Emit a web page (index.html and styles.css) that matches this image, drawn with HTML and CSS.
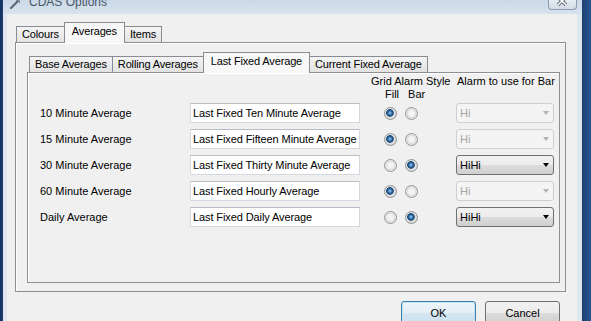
FILE: index.html
```html
<!DOCTYPE html>
<html lang="en">
<head>
    <meta charset="UTF-8">
    <title>CDAS Options</title>
    <link rel="stylesheet" href="styles.css">
</head>
<body>
    <div class="window">
        <div class="titlebar">
            <svg class="app-icon" width="10" height="9" viewBox="0 0 10 9">
                <path d="M1 8 L8 1" stroke="#5a6470" stroke-width="2" stroke-linecap="round"/>
                <path d="M6 0.5 L9.5 0.5 L9.5 3" stroke="#7a8490" stroke-width="1" fill="none"/>
            </svg>
            <span class="title">CDAS Options</span>
            <div class="close-btn">
                <svg width="13" height="8" viewBox="0 0 13 8">
                    <path d="M2 -3 L10 5 M10 -3 L2 5" stroke="#5b6878" stroke-width="3.4"/>
                    <path d="M2 -3 L10 5 M10 -3 L2 5" stroke="#ffffff" stroke-width="1.6"/>
                </svg>
            </div>
        </div>

        <div class="client">
            <div class="tabs outer-tabs">
                <div class="tab">Colours</div>
                <div class="tab selected">Averages</div>
                <div class="tab">Items</div>
            </div>
            <div class="panel outer-panel">
                <div class="tabs inner-tabs">
                    <div class="tab">Base Averages</div>
                    <div class="tab">Rolling Averages</div>
                    <div class="tab selected">Last Fixed Average</div>
                    <div class="tab">Current Fixed Average</div>
                </div>
                <div class="panel inner-panel">
                    <div class="head-row cols">
                        <span class="head-style">Grid Alarm Style</span>
                        <span class="head-alarm">Alarm to use for Bar</span>
                    </div>
                    <div class="sub-head cols">
                        <span class="sub-pair"><span>Fill</span><span>Bar</span></span>
                    </div>

                    <div class="avg-row cols">
                        <span class="row-label">10 Minute Average</span>
                        <div class="textbox">Last Fixed Ten Minute Average</div>
                        <div class="radios"><span class="radio checked"></span><span class="radio"></span></div>
                        <div class="combo disabled"><span>Hi</span><span class="arrow"></span></div>
                    </div>
                    <div class="avg-row cols">
                        <span class="row-label">15 Minute Average</span>
                        <div class="textbox">Last Fixed Fifteen Minute Average</div>
                        <div class="radios"><span class="radio checked"></span><span class="radio"></span></div>
                        <div class="combo disabled"><span>Hi</span><span class="arrow"></span></div>
                    </div>
                    <div class="avg-row cols">
                        <span class="row-label">30 Minute Average</span>
                        <div class="textbox">Last Fixed Thirty Minute Average</div>
                        <div class="radios"><span class="radio"></span><span class="radio checked"></span></div>
                        <div class="combo"><span>HiHi</span><span class="arrow"></span></div>
                    </div>
                    <div class="avg-row cols">
                        <span class="row-label">60 Minute Average</span>
                        <div class="textbox">Last Fixed Hourly Average</div>
                        <div class="radios"><span class="radio checked"></span><span class="radio"></span></div>
                        <div class="combo disabled"><span>Hi</span><span class="arrow"></span></div>
                    </div>
                    <div class="avg-row cols">
                        <span class="row-label">Daily Average</span>
                        <div class="textbox">Last Fixed Daily Average</div>
                        <div class="radios"><span class="radio"></span><span class="radio checked"></span></div>
                        <div class="combo"><span>HiHi</span><span class="arrow"></span></div>
                    </div>
                </div>
            </div>

            <div class="buttons">
                <button class="btn default">OK</button>
                <button class="btn">Cancel</button>
            </div>
        </div>
    </div>
</body>
</html>
```

FILE: styles.css
```css
body {
    margin: 0;
    height: 321px;
    overflow: hidden;
    background: linear-gradient(90deg, #14305c 0, #1d3f73 3px, #1d3f73 582px, #2a5590 591px);
    font-family: "Liberation Sans", Arial, sans-serif;
    font-size: 11px;
    color: #000000;
}

.window {
    width: 579px;
    height: 340px;
    margin-left: 3px;
    background: #dfe6ee;
    display: flex;
    flex-direction: column;
}

/* title bar, top is cut off by the screenshot */
.titlebar {
    height: 14px;
    display: flex;
    align-items: flex-start;
    background: linear-gradient(#cad8e7, #d9e3ee);
    overflow: hidden;
}

.app-icon {
    margin: 0 0 0 7px;
}

.title {
    margin: -5px 0 0 9px;
    font-size: 12px;
    line-height: 14px;
    color: #4a5868;
}

.close-btn {
    margin-left: auto;
    margin-right: 5px;
    width: 29px;
    height: 10px;
    box-sizing: border-box;
    border: 1px solid #8d9aab;
    border-top: none;
    border-radius: 0 0 4px 4px;
    background: linear-gradient(#e6ecf3, #d3dce7);
    display: flex;
    justify-content: center;
}

.client {
    flex: 1;
    margin: 0 5px 0 4px;
    padding: 8px 0 0 8px;
    background: #f0f0f0;
}

/* tabs */
.tabs {
    display: flex;
    align-items: flex-end;
    height: 20px;
}

.outer-tabs {
    padding-left: 1px;
}

.inner-tabs {
    padding-left: 2px;
}

.tab {
    height: 16px;
    box-sizing: border-box;
    padding: 0 5px;
    margin-right: -1px;
    border: 1px solid #898c95;
    border-bottom: none;
    background: linear-gradient(#f4f4f4, #e2e2e2);
    line-height: 15px;
    letter-spacing: -0.15px;
    white-space: nowrap;
}

.tab.selected {
    height: 21px;
    margin-bottom: -1px;
    padding: 0 7px;
    line-height: 17px;
    background: #f7f7f7;
    position: relative;
    z-index: 1;
}

.panel {
    box-sizing: border-box;
    border: 1px solid #8e8f91;
    box-shadow: inset 1px 1px 0 #ffffff;
    background: #f0f0f0;
}

.outer-panel {
    width: 551px;
    height: 250px;
    padding: 9px 0 0 11px;
}

.inner-panel {
    width: 533px;
    height: 211px;
    padding: 2px 0 0 12px;
}

/* averages grid */
.cols {
    display: grid;
    grid-template-columns: 150px 170px 96px 98px;
    align-items: center;
}

.head-row {
    height: 13px;
    line-height: 13px;
}

.head-style {
    grid-column: 3;
    padding-left: 11px;
    white-space: nowrap;
}

.head-alarm {
    grid-column: 4;
    padding-left: 1px;
    white-space: nowrap;
}

.sub-head {
    height: 12px;
    line-height: 12px;
    margin-bottom: 3px;
}

.sub-pair {
    grid-column: 3;
    display: flex;
    gap: 9px;
    padding-left: 25px;
}

.avg-row {
    height: 20px;
    margin-bottom: 6px;
}

.row-label {
    line-height: 20px;
}

.textbox {
    height: 20px;
    box-sizing: border-box;
    border: 1px solid #d5d8de;
    border-top-color: #b9bcc4;
    background: #ffffff;
    padding-left: 2px;
    line-height: 18px;
    letter-spacing: -0.1px;
    white-space: nowrap;
}

.radios {
    display: flex;
    gap: 8px;
    padding-left: 24px;
}

.radio {
    width: 13px;
    height: 13px;
    box-sizing: border-box;
    border-radius: 50%;
    border: 1px solid #939393;
    background: radial-gradient(circle, #f6f6f6 0, #f1f1f1 3px, #d8d8d8 4.5px, #f2f2f2 5.5px);
}

.radio.checked {
    background: radial-gradient(circle at 45% 45%, #a9d0ee 0, #2d6fab 2px, #16406c 3.4px, #e6e6e6 4.2px, #d9d9d9 5.5px);
}

.combo {
    height: 20px;
    box-sizing: border-box;
    border: 1px solid #707070;
    border-radius: 3px;
    padding: 0 4px 0 3px;
    display: flex;
    align-items: center;
    justify-content: space-between;
    background: linear-gradient(#f2f2f2 0, #ebebeb 50%, #dddddd 51%, #cfcfcf 100%);
}

.combo.disabled {
    border-color: #cfcfcf;
    background: #f4f4f4;
    color: #a4a4a4;
}

.arrow {
    width: 0;
    height: 0;
    border-left: 3.5px solid transparent;
    border-right: 3.5px solid transparent;
    border-top: 4px solid #000000;
}

.combo.disabled .arrow {
    border-top-color: #b4b4b4;
}

/* dialog buttons */
.buttons {
    width: 551px;
    box-sizing: border-box;
    display: flex;
    justify-content: flex-end;
    gap: 9px;
    margin-top: 9px;
    padding-right: 6px;
}

.btn {
    width: 75px;
    height: 23px;
    border: 1px solid #707070;
    border-radius: 3px;
    background: linear-gradient(#f2f2f2 0, #ebebeb 50%, #dddddd 51%, #cfcfcf 100%);
    font-family: "Liberation Sans", Arial, sans-serif;
    font-size: 11px;
    color: #000000;
    padding: 0;
}

.btn.default {
    border-color: #3c7fb1;
    box-shadow: inset 0 0 0 1px #c6e6f8;
    background: linear-gradient(#eef5fa 0, #e3eef6 50%, #d5e6f2 51%, #cbe0ef 100%);
}
```
